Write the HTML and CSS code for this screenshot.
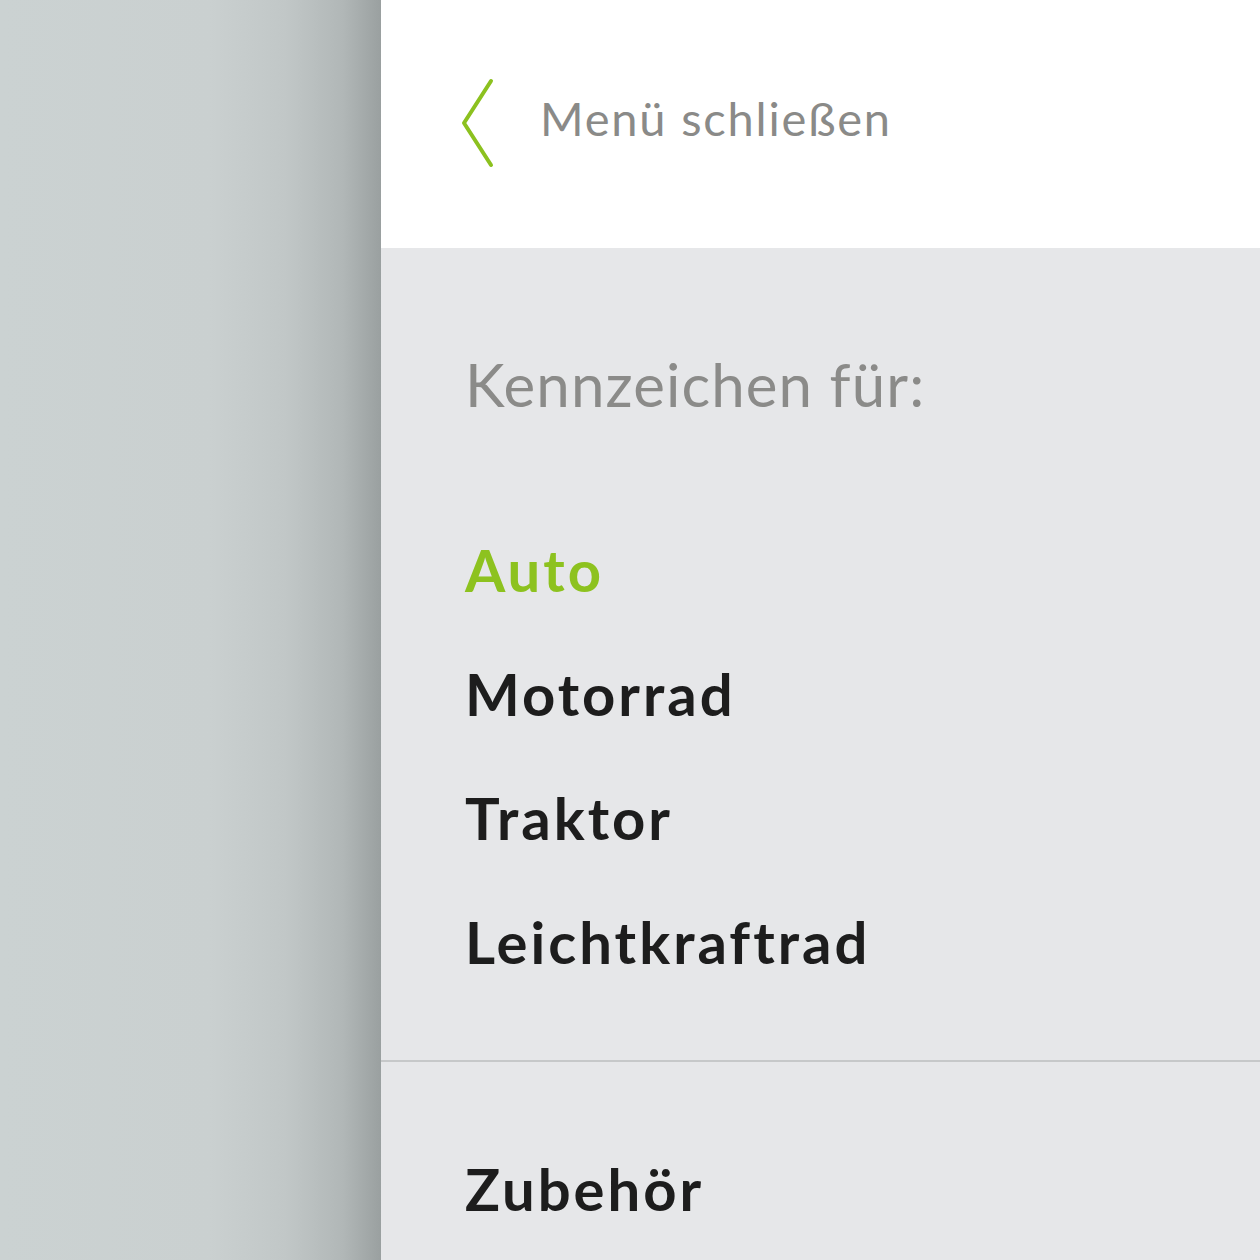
FILE: index.html
```html
<!DOCTYPE html>
<html lang="de">
<head>
  <meta charset="UTF-8" />
  <meta name="viewport" content="width=device-width, initial-scale=1.0"/>
  <title>Menü</title>
  <link rel="stylesheet" href="styles.css">
</head>
<body>
  <div class="page">
    <!-- abgedunkelter Hintergrund -->
    <div class="backdrop"></div>

    <!-- Menü-Panel -->
    <nav class="menu">
      <div class="menu-head">
        <a class="close-link" href="#">
          <svg class="chevron" width="36" height="90" viewBox="0 0 36 90">
            <polyline points="30,3 3,45 30,87" fill="none" stroke="#8cc11f" stroke-width="4" stroke-linecap="round" stroke-linejoin="round"/>
          </svg>
          <span class="close-label">Menü schließen</span>
        </a>
      </div>

      <div class="menu-section">
        <p class="section-title">Kennzeichen für:</p>
        <ul class="menu-list">
          <li><a href="#" class="active">Auto</a></li>
          <li><a href="#">Motorrad</a></li>
          <li><a href="#">Traktor</a></li>
          <li><a href="#">Leichtkraftrad</a></li>
        </ul>
      </div>

      <div class="menu-section extra">
        <ul class="menu-list">
          <li><a href="#">Zubehör</a></li>
        </ul>
      </div>
    </nav>
  </div>
</body>
</html>
```

FILE: styles.css
```css
body {
  margin: 0;
  font-family: Lato, "Open Sans", sans-serif;
  overflow: hidden;
}

.page {
  display: flex;
  height: 1260px;
}

.backdrop {
  width: 381px;
  flex-shrink: 0;
  background: linear-gradient(to right, #cbd2d2 0%, #cad0d0 55%, #c1c7c7 75%, #b1b7b7 90%, #9aa0a0 100%);
}

.menu {
  flex: 1;
  display: flex;
  flex-direction: column;
  background-color: #e6e7e9;
}

.menu-head {
  height: 248px;
  flex-shrink: 0;
  background-color: #fff;
  display: flex;
  align-items: center;
  padding-left: 80px;
}

.close-link {
  display: flex;
  align-items: center;
  gap: 43px;
  text-decoration: none;
  color: #8a8a88;
  font-size: 47px;
  letter-spacing: 1.8px;
  margin-top: -2px;
}

.close-label {
  margin-bottom: 10px;
}

.chevron {
  display: block;
}

.menu-section {
  flex-shrink: 0;
  padding: 0 0 0 84px;
}

.section-title {
  margin: 0;
  padding-top: 106px;
  font-size: 60px;
  line-height: 60px;
  letter-spacing: 1.1px;
  color: #8b8b89;
}

.menu-list {
  list-style: none;
  margin: 0;
  padding: 0;
}

.menu-list a {
  display: block;
  font-size: 58px;
  line-height: 124px;
  font-weight: 700;
  letter-spacing: 3px;
  color: #1d1d1d;
  text-decoration: none;
}

.section-title + .menu-list {
  margin-top: 94px;
  padding-bottom: 56px;
  border-bottom: 2px solid #c6c8c9;
  margin-left: -84px;
  padding-left: 84px;
}

.menu-list a.active {
  color: #8dc21f;
}

.extra {
  padding-top: 65px;
}
```
